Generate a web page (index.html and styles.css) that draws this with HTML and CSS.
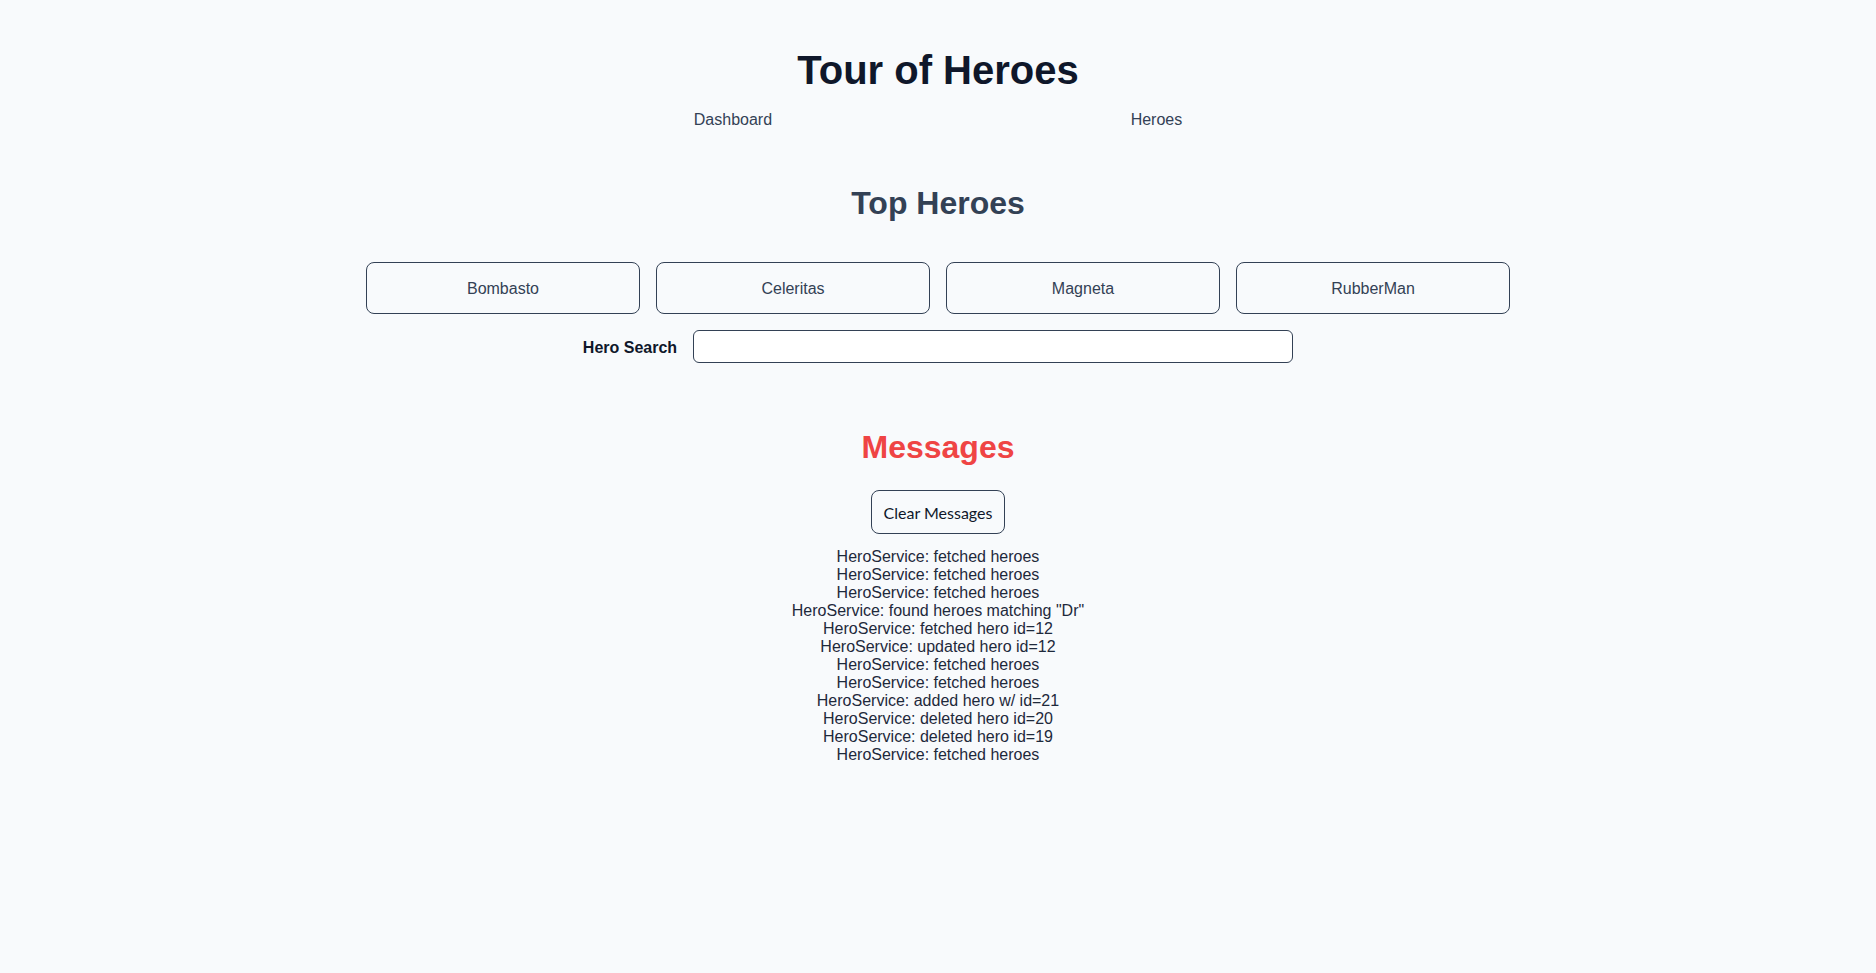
FILE: index.html
```html
<!DOCTYPE html>
<html lang="en">
<head>
<meta charset="utf-8">
<title>Tour of Heroes</title>
<link rel="stylesheet" href="styles.css">
</head>
<body>
<div class="app">
  <h1 class="title">Tour of Heroes</h1>
  <nav class="nav">
    <a class="nav-link" href="#">Dashboard</a>
    <a class="nav-link" href="#">Heroes</a>
  </nav>
  <main class="dashboard">
    <h2 class="section-title">Top Heroes</h2>
    <div class="cards">
      <a class="card" href="#">Bombasto</a>
      <a class="card" href="#">Celeritas</a>
      <a class="card" href="#">Magneta</a>
      <a class="card" href="#">RubberMan</a>
    </div>
    <div class="search">
      <label class="search-label" for="search-box">Hero Search</label>
      <input class="search-input" id="search-box" type="text">
    </div>
  </main>
  <section class="messages">
    <h2 class="messages-title">Messages</h2>
    <button class="clear-btn" type="button">Clear Messages</button>
    <div class="message-list">
      <div>HeroService: fetched heroes</div>
      <div>HeroService: fetched heroes</div>
      <div>HeroService: fetched heroes</div>
      <div>HeroService: found heroes matching "Dr"</div>
      <div>HeroService: fetched hero id=12</div>
      <div>HeroService: updated hero id=12</div>
      <div>HeroService: fetched heroes</div>
      <div>HeroService: fetched heroes</div>
      <div>HeroService: added hero w/ id=21</div>
      <div>HeroService: deleted hero id=20</div>
      <div>HeroService: deleted hero id=19</div>
      <div>HeroService: fetched heroes</div>
    </div>
  </section>
</div>
</body>
</html>
```
FILE: styles.css
```css
* { box-sizing: border-box; }
html, body {
  margin: 0;
  padding: 0;
  background: #f8fafc;
}
body {
  font-family: "Liberation Sans", Arial, sans-serif;
  color: #0f172a;
  min-height: 973px;
}
.app {
  display: flex;
  flex-direction: column;
  align-items: center;
}
.title {
  margin: 50px 0 0;
  font-size: 40px;
  line-height: 40px;
  font-weight: 700;
  color: #0f172a;
}
.nav {
  margin-top: 22px;
  width: 847px;
  display: flex;
  justify-content: space-around;
}
.nav-link {
  font-size: 16px;
  line-height: 16px;
  color: #334155;
  text-decoration: none;
}
.dashboard {
  display: flex;
  flex-direction: column;
  align-items: center;
  width: 1144px;
}
.section-title {
  margin: 59px 0 0;
  font-size: 32px;
  line-height: 32px;
  font-weight: 700;
  color: #334155;
}
.cards {
  margin-top: 43px;
  width: 1144px;
  display: grid;
  grid-template-columns: repeat(4, 1fr);
  gap: 16px;
}
.card {
  height: 52px;
  padding-top: 2px;
  display: flex;
  align-items: center;
  justify-content: center;
  border: 1px solid #334155;
  border-radius: 8px;
  font-size: 16px;
  color: #334155;
  text-decoration: none;
}
.search {
  margin-top: 16px;
  display: flex;
  align-items: center;
  gap: 16px;
}
.search-label {
  padding-top: 3px;
  font-size: 16px;
  font-weight: 700;
  color: #0f172a;
}
.search-input {
  width: 600px;
  height: 33px;
  border: 1px solid #334155;
  border-radius: 6px;
  background: #ffffff;
  font-family: inherit;
  font-size: 16px;
  padding: 0 8px;
}
.messages {
  display: flex;
  flex-direction: column;
  align-items: center;
}
.messages-title {
  margin: 68px 0 0;
  font-size: 32px;
  line-height: 32px;
  font-weight: 700;
  color: #ef4444;
}
.clear-btn {
  margin-top: 27px;
  width: 134px;
  height: 44px;
  border: 1px solid #334155;
  border-radius: 8px;
  background: #f8fafc;
  color: #0f172a;
  font-family: Lato, "Open Sans", sans-serif;
  font-size: 16px;
  padding: 0;
}
.message-list {
  margin-top: 14px;
  text-align: center;
  font-size: 16px;
  line-height: 18px;
  color: #1e293b;
}
```
